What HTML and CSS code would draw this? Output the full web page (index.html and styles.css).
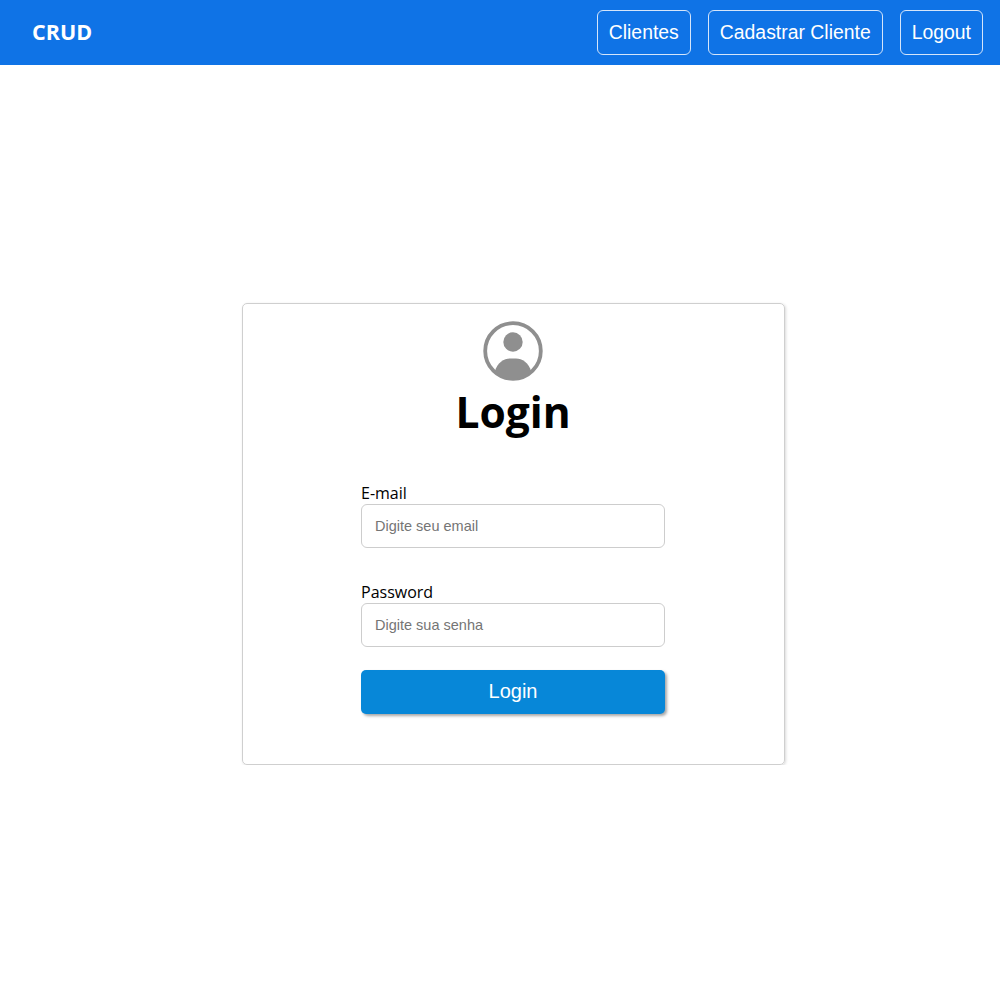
FILE: index.html
```html
<!DOCTYPE html>
<html lang="en">
<head>
  <meta charset="UTF-8">
  <title>Login</title>
  <link rel="stylesheet" href="styles.css">
</head>
<body>

  <nav class="navbar">
    <span class="brand">CRUD</span>
    <div class="nav-links">
      <a class="nav-btn" href="#">Clientes</a>
      <a class="nav-btn" href="#">Cadastrar Cliente</a>
      <a class="nav-btn" href="#">Logout</a>
    </div>
  </nav>

  <main class="page">
    <div class="card">
      <svg class="avatar" viewBox="0 0 60 60" width="60" height="60">
        <circle cx="30" cy="30" r="27.8" fill="none" stroke="#8f8f8f" stroke-width="3.8"/>
        <circle cx="30" cy="21" r="9.7" fill="#8f8f8f"/>
        <path d="M12 50 C14 42 21 37.5 27 37.5 L33 37.5 C39 37.5 46 42 48 50 C44 56 37 58 30 58 C23 58 16 56 12 50 Z" fill="#8f8f8f"/>
      </svg>
      <h1>Login</h1>

      <form class="login-form">
        <div class="field">
          <label for="email">E-mail</label>
          <input type="text" id="email" placeholder="Digite seu email">
        </div>
        <div class="field">
          <label for="password">Password</label>
          <input type="password" id="password" placeholder="Digite sua senha">
        </div>
        <button type="submit">Login</button>
      </form>
    </div>
  </main>

</body>
</html>
```

FILE: styles.css
```css
* {
  box-sizing: border-box;
}

body {
  margin: 0;
  background: white;
  font-family: "Open Sans", "Noto Sans", sans-serif;
  color: black;
}

.navbar {
  height: 65px;
  background: #0f73e6;
  display: flex;
  align-items: center;
  justify-content: space-between;
  padding: 0 17px 0 32px;
}

.brand {
  color: white;
  font-size: 21.5px;
  font-weight: bold;
  margin-top: -3px;
}

.nav-links {
  display: flex;
  gap: 17px;
}

.nav-btn {
  height: 45px;
  padding: 0 11px;
  display: flex;
  align-items: center;
  border: 1px solid #d5e5fa;
  border-radius: 6px;
  color: white;
  text-decoration: none;
  font-family: "Liberation Sans", Arial, sans-serif;
  font-size: 19.4px;
}

.page {
  padding: 238px 0 0 242px;
}

.card {
  width: 543px;
  height: 462px;
  padding: 17px 1px 0 0;
  display: flex;
  flex-direction: column;
  align-items: center;
  border: 1px solid #cfcfcf;
  border-radius: 5px;
  box-shadow: 1px 1px 3px rgba(0,0,0,0.15);
}

.avatar {
  display: block;
}

h1 {
  margin: 1px 0 41px;
  font-size: 42.5px;
  line-height: 60px;
  font-weight: bold;
}

.login-form {
  width: 304px;
}

.field {
  margin-bottom: 23px;
}

.field + .field {
  margin-top: 34px;
}

label {
  display: block;
  font-size: 16px;
  line-height: 21px;
}

input {
  display: block;
  width: 100%;
  height: 44px;
  padding: 0 13px;
  border: 1px solid #cdcdcd;
  border-radius: 6px;
  font-family: "Liberation Sans", Arial, sans-serif;
  font-size: 14.5px;
}

input::placeholder {
  color: #757575;
}

button {
  display: block;
  width: 100%;
  height: 44px;
  padding-bottom: 3px;
  background-color: #0787d8;
  color: white;
  border: none;
  border-radius: 5px;
  font-family: "Liberation Sans", Arial, sans-serif;
  font-size: 20px;
  box-shadow: 2px 2px 3px rgba(0,0,0,0.35);
  cursor: pointer;
}
```
